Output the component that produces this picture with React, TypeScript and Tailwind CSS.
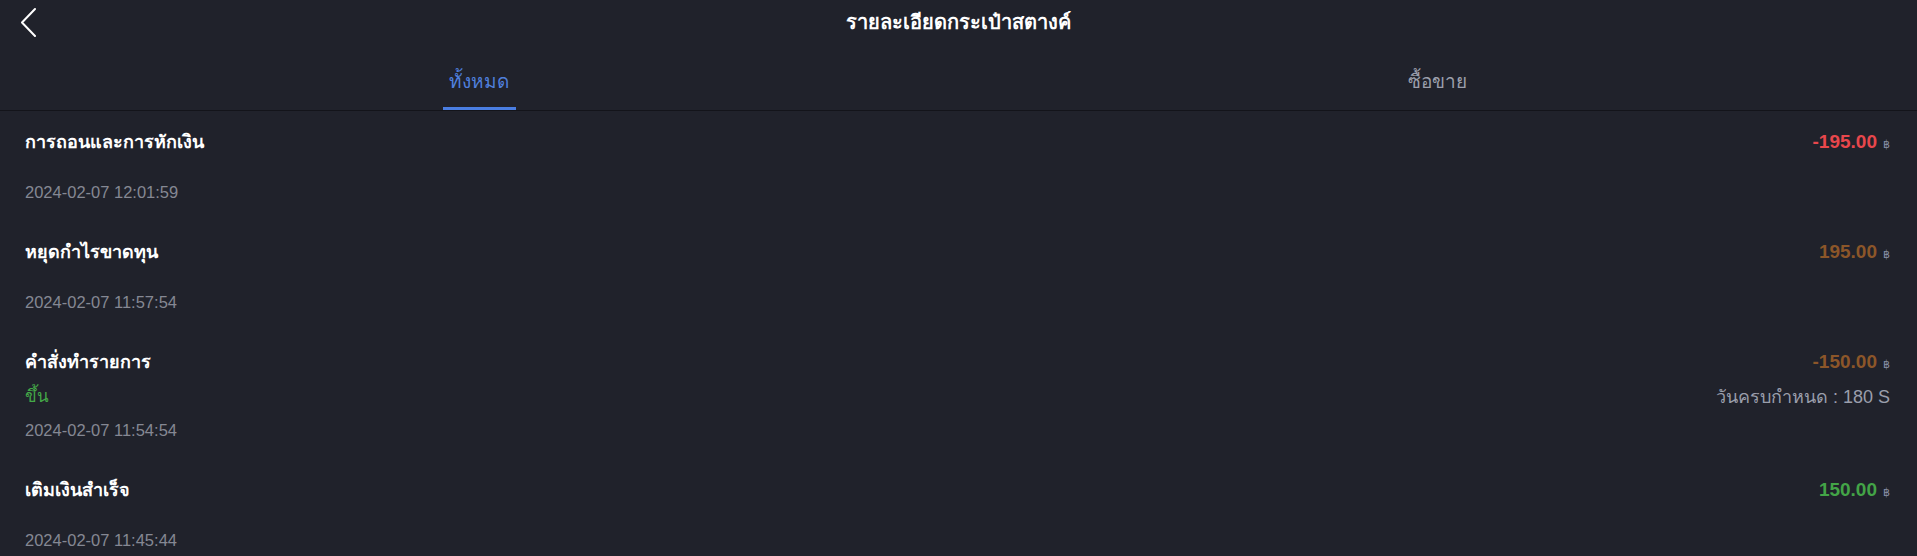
import React from "react";

type Row = {
  title: string;
  amount: string;
  color: string;
  date: string;
  side?: string;
  note?: string;
};

const rows: Row[] = [
  { title: "การถอนและการหักเงิน", amount: "-195.00", color: "text-[#e8474c]", date: "2024-02-07 12:01:59" },
  { title: "หยุดกำไรขาดทุน", amount: "195.00", color: "text-[#8c5629]", date: "2024-02-07 11:57:54" },
  {
    title: "คำสั่งทำรายการ",
    amount: "-150.00",
    color: "text-[#8c5629]",
    date: "2024-02-07 11:54:54",
    side: "ขึ้น",
    note: "วันครบกำหนด : 180 S",
  },
  { title: "เติมเงินสำเร็จ", amount: "150.00", color: "text-[#43a447]", date: "2024-02-07 11:45:44" },
];

const font = "font-['Liberation_Sans','Noto_Sans',sans-serif]";

const RecordRow: React.FC<{ row: Row }> = ({ row }) => (
  <div className="pl-[25px] pr-[27px] pt-[19px] pb-[17px]">
    <div className="flex items-center justify-between h-6">
      <span className="text-white text-[18px] font-bold">{row.title}</span>
      <span className="flex items-baseline">
        <span className={`${row.color} text-[19px] font-bold`}>{row.amount}</span>
        <span className="ml-[6px] text-[11px] text-[#8990a6]">฿</span>
      </span>
    </div>
    {row.side ? (
      <div className="flex items-center justify-between h-6 mt-[11px]">
        <span className="text-[#44a848] text-[17px]">{row.side}</span>
        <span className="text-[#9a9eab] text-[18px]">{row.note}</span>
      </div>
    ) : null}
    <div className={`flex items-center h-6 ${row.side ? "mt-[9px]" : "mt-[26px]"}`}>
      <span className="text-[#858893] text-[16.5px]">{row.date}</span>
    </div>
  </div>
);

export default function App() {
  return (
    <div className={`w-full min-h-screen bg-[#20222b] ${font}`}>
      <div className="relative h-[44px] flex items-center justify-center">
        <button className="absolute left-[18px] top-[6px] w-[20px] h-[32px] flex items-center justify-center">
          <svg width="18" height="30" viewBox="0 0 18 30" fill="none">
            <path d="M16 2 L3 15.5 L16 29" stroke="#ffffff" strokeWidth="2" strokeLinecap="round" strokeLinejoin="round" />
          </svg>
        </button>
        <h1 className="text-white text-[20px] font-bold">รายละเอียดกระเป๋าสตางค์</h1>
      </div>

      <div className="flex h-[67px] border-b border-[#13141a]">
        <div className="flex-1 flex flex-col items-center justify-end">
          <span className="text-[#4f7fdc] text-[19px] font-medium mb-[11px]">ทั้งหมด</span>
          <div className="w-[73px] h-[3px] bg-[#4a7ee2]" />
        </div>
        <div className="flex-1 flex flex-col items-center justify-end">
          <span className="text-[#9b9fac] text-[19px] font-medium mb-[14px]">ซื้อขาย</span>
        </div>
      </div>

      <div>
        {rows.map((row) => (
          <RecordRow key={row.date} row={row} />
        ))}
      </div>
    </div>
  );
}
